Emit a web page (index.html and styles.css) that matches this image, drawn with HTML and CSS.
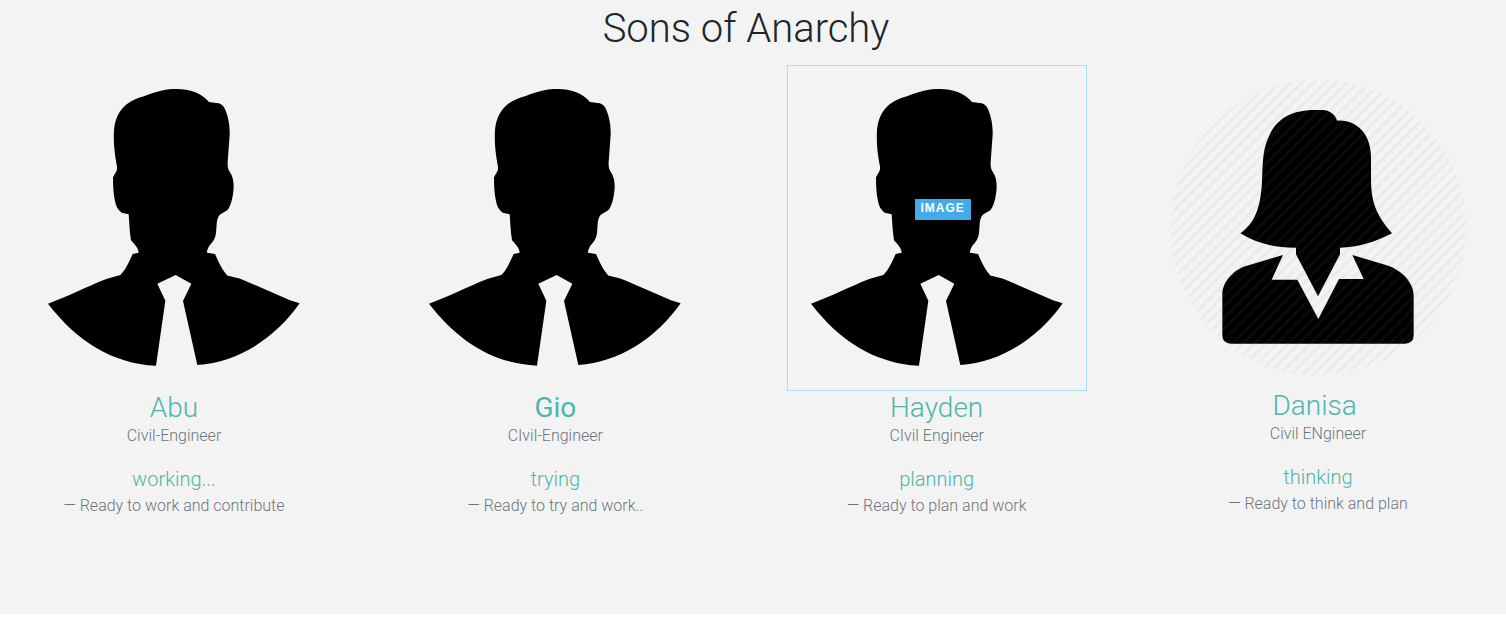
FILE: index.html
```html
<!DOCTYPE html>
<html lang="en">
<head>
<meta charset="utf-8">
<title>Sons of Anarchy</title>
<link rel="stylesheet" href="styles.css">
</head>
<body>
<svg class="defs" aria-hidden="true">
  <symbol id="man" viewBox="-18 -15 900 978">
    <path d="M342 79C385 61 412 57 437 57C475 56 512 67 537 96L559 99C570 99 577 104 582 112C592 130 600 160 599 194L593 275C592 288 594 298 600 307C608 318 611 333 611 350C610 377 604 405 592 421L574 431C564 437 561 449 560 462L558 490C556 506 548 517 538 527C533 535 531 541 531 548L555 552C566 577 576 600 593 617C617 622 630 625 645 632L780 691L809 700C735 805 625 877 502 885L459 693L484 641L437 615L382 641L406 692L378 887C245 881 139 811 54 701C115 680 170 650 227 628C243 622 257 620 271 615C288 598 297 576 308 552L326 548C325 534 314 523 303 511C299 486 298 461 296 433L275 428C263 420 258 408 255 394C250 370 249 347 249 322L260 302C262 294 261 288 259 280C253 248 250 214 252 180C255 146 269 119 290 103C306 90 325 84 342 79Z"/>
  </symbol>
</svg>
<section class="team">
  <h1 class="title">Sons of Anarchy</h1>
  <div class="members">
    <article class="card">
      <div class="photo"><svg class="portrait" viewBox="0 0 300 326" role="img" aria-label="Abu"><use href="#man"/></svg></div>
      <h2 class="name">Abu</h2>
      <p class="role">Civil-Engineer</p>
      <h3 class="status">working...</h3>
      <p class="quote">— Ready to work and contribute</p>
    </article>
    <article class="card">
      <div class="photo"><svg class="portrait" viewBox="0 0 300 326" role="img" aria-label="Gio"><use href="#man"/></svg></div>
      <h2 class="name strong">Gio</h2>
      <p class="role">CIvil-Engineer</p>
      <h3 class="status">trying</h3>
      <p class="quote">— Ready to try and work..</p>
    </article>
    <article class="card">
      <div class="photo selected"><svg class="portrait" viewBox="0 0 300 326" role="img" aria-label="Hayden"><use href="#man"/></svg><span class="tag">IMAGE</span></div>
      <h2 class="name">Hayden</h2>
      <p class="role">CIvil Engineer</p>
      <h3 class="status">planning</h3>
      <p class="quote">— Ready to plan and work</p>
    </article>
    <article class="card">
      <div class="photo">
        <svg class="portrait" viewBox="24 -15 900 972" role="img" aria-label="Danisa">
          <defs>
            <pattern id="stripes" width="23.8" height="23.8" patternUnits="userSpaceOnUse" patternTransform="rotate(-45)">
              <rect y="15.5" width="23.8" height="7" fill="#808080" fill-opacity=".09"/>
            </pattern>
          </defs>
          <path d="M241 490C282 459 301 422 306 335C308 280 308 246 322 210C342 156 382 120 465 120H487C512 121 528 137 531 152C592 148 633 194 633 262V335C635 402 651 436 696 490C648 516 594 532 540 533V553L474 679L408 553V533C346 534 292 521 241 490Z"/>
          <path d="M369 555L335 629H412L475 747L537 627H611L577 555L680 586C725 600 761 638 761 677V795Q761 821 735 821H213Q187 821 187 795V672C187 637 220 599 258 588Z"/>
          <circle cx="475" cy="473" r="444" fill="url(#stripes)"/>
        </svg>
      </div>
      <h2 class="name">Danisa&nbsp;</h2>
      <p class="role">Civil ENgineer</p>
      <h3 class="status">thinking</h3>
      <p class="quote">— Ready to think and plan</p>
    </article>
  </div>
</section>
</body>
</html>
```
FILE: styles.css
```css
body {
  margin: 0;
  background: #fff;
  color: #6c757d;
  font: 300 16px/24px Roboto, sans-serif;
}
h1, h2, h3, p { margin: 0; font-weight: 300; }
.defs { position: absolute; width: 0; height: 0; }
.team {
  padding: 5px 38px 96px 24px;
  background: #f3f3f3;
  text-align: center;
}
.title {
  margin-bottom: 12px;
  color: #212529;
  font-size: 40px;
  line-height: 48px;
}
.members {
  display: flex;
  justify-content: space-between;
  align-items: flex-start;
}
.card { width: 300px; }
.photo { position: relative; }
.portrait { display: block; width: 100%; height: auto; }
.selected { outline: 1px solid #a5dffa; outline-offset: -1px; }
.tag {
  position: absolute;
  top: 134px;
  left: 128px;
  box-sizing: border-box;
  width: 56px;
  height: 21px;
  background: #43ace8;
  color: #fff;
  font: bold 12px/18px "Liberation Sans", Arial, sans-serif;
  letter-spacing: 1px;
}
.name, .status { color: #4db6ac; }
.name { font-size: 28px; line-height: 33px; }
.name.strong { font-weight: 400; }
.role { margin-bottom: 19px; }
.status { font-size: 20px; line-height: 24px; margin-bottom: 3px; }
```
